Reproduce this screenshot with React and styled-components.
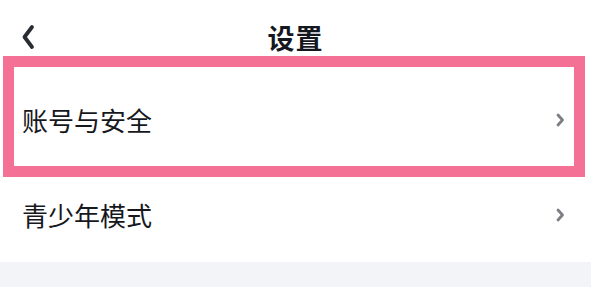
import React from 'react'
import styled, { createGlobalStyle } from 'styled-components'

const GlobalStyle = createGlobalStyle`
  html, body {
    margin: 0;
    padding: 0;
    background: #fff;
  }
  body {
    font-family: "Noto Sans CJK SC", "Noto Sans", sans-serif;
  }
`

const Page = styled.div`
  position: relative;
  width: 591px;
  height: 287px;
  overflow: hidden;
  background: #fff;
  display: flex;
  flex-direction: column;
`

const Header = styled.div`
  height: 73px;
  display: flex;
  align-items: center;
  justify-content: center;
  position: relative;
`

const BackButton = styled.button`
  position: absolute;
  left: 18px;
  top: 23px;
  width: 20px;
  height: 28px;
  padding: 0;
  border: 0;
  background: transparent;
  display: flex;
  align-items: center;
  justify-content: center;
`

const Title = styled.h1`
  margin: 0;
  font-size: 27px;
  font-weight: 700;
  color: #15171e;
  letter-spacing: 1px;
  line-height: 1;
  transform: translateY(1px);
`

const List = styled.div`
  display: flex;
  flex-direction: column;
`

const Row = styled.div`
  height: 94.5px;
  display: flex;
  align-items: center;
  justify-content: space-between;
  padding: 0 26px 0 22px;
  box-sizing: border-box;
`

const Label = styled.span`
  font-size: 26px;
  color: #16181d;
  line-height: 1;
`

const Footer = styled.div`
  flex: 1;
  background: #f2f4f8;
`

// annotation frame drawn over the first row
const Highlight = styled.div`
  position: absolute;
  left: 3px;
  top: 56px;
  width: 582px;
  height: 121px;
  box-sizing: border-box;
  border: 11px solid #f47095;
  pointer-events: none;
`

const Back = () => (
  <svg width='14' height='26' viewBox='0 0 14 26'>
    <path
      d='M11 3 L3.5 13 L11 23'
      fill='none'
      stroke='#2a2c33'
      strokeWidth='3.8'
      strokeLinecap='round'
      strokeLinejoin='round'
    />
  </svg>
)

const Chevron = () => (
  <svg width='10' height='14' viewBox='0 0 10 14'>
    <path
      d='M3 2 L7.5 7 L3 12'
      fill='none'
      stroke='#7d7e85'
      strokeWidth='2.8'
      strokeLinecap='round'
      strokeLinejoin='round'
    />
  </svg>
)

const items = ['账号与安全', '青少年模式']

const App = () => (
  <>
    <GlobalStyle />
    <Page>
      <Header>
        <BackButton aria-label='back'>
          <Back />
        </BackButton>
        <Title>设置</Title>
      </Header>
      <List>
        {items.map(item => (
          <Row key={item}>
            <Label>{item}</Label>
            <Chevron />
          </Row>
        ))}
      </List>
      <Footer />
      <Highlight />
    </Page>
  </>
)

export default App
